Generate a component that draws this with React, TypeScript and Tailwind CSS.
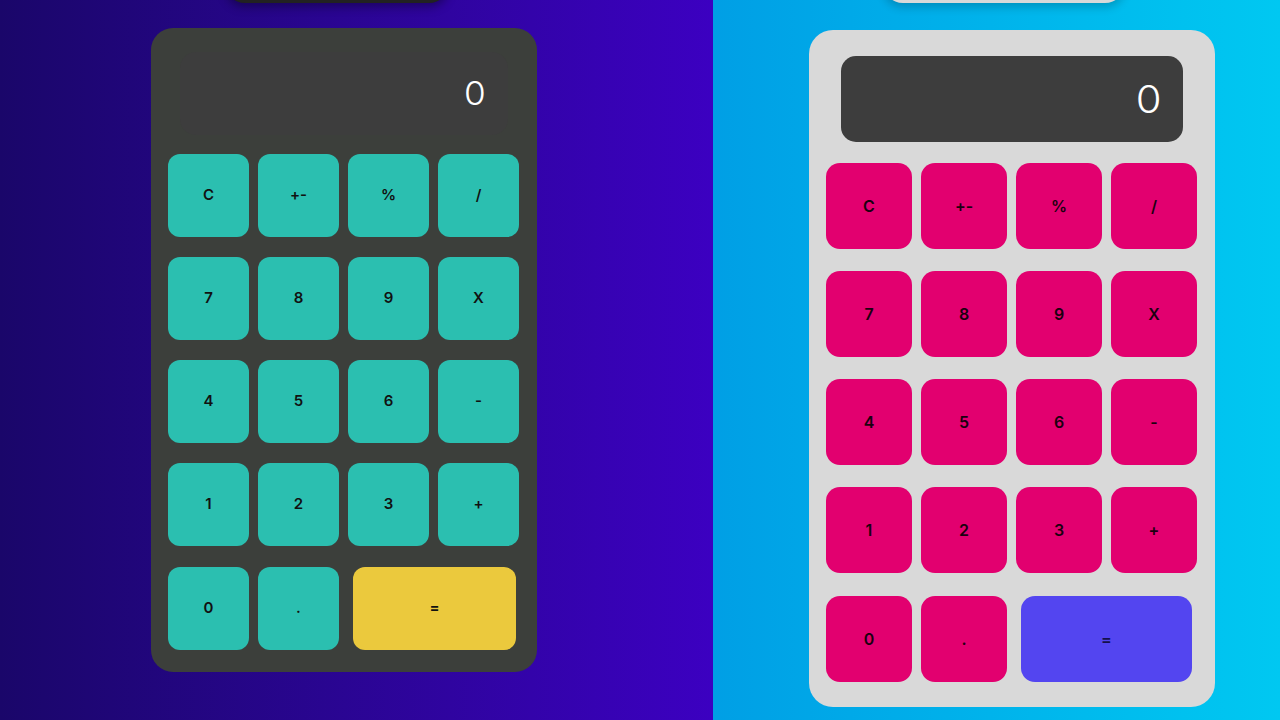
const keys = ["C", "+-", "%", "/", "7", "8", "9", "X", "4", "5", "6", "-", "1", "2", "3", "+"];

function DarkCalc() {
  return (
    <div className="w-[386px] h-[644px] rounded-[22px] bg-[#3c3f3b] pt-[24px] px-[17px] flex flex-col">
      <div className="mx-[12px] h-[83px] rounded-[16px] bg-[#3d3d3d] flex items-center justify-end pr-[23px]">
        <span className="text-[32px] font-light text-white leading-none scale-x-110">0</span>
      </div>
      <div className="mt-[19px] grid grid-cols-[repeat(4,81px)] gap-x-[9px] gap-y-[20px]">
        {keys.map((k) => (
          <button
            key={k}
            className="h-[83px] rounded-[12px] bg-[#2bbfb0] text-[15px] font-semibold text-[#111]"
          >
            {k}
          </button>
        ))}
      </div>
      <div className="mt-[21px] flex">
        <button className="w-[81px] h-[83px] rounded-[12px] bg-[#2bbfb0] text-[15px] font-semibold text-[#111]">
          0
        </button>
        <button className="ml-[9px] w-[81px] h-[83px] rounded-[12px] bg-[#2bbfb0] text-[15px] font-semibold text-[#111]">
          .
        </button>
        <button className="ml-[14px] w-[163px] h-[83px] rounded-[12px] bg-[#ebc93d] text-[15px] font-semibold text-[#111]">
          =
        </button>
      </div>
    </div>
  );
}

function LightCalc() {
  return (
    <div className="w-[406px] h-[677px] rounded-[24px] bg-[#d9d9d9] pt-[26px] px-[17px] flex flex-col">
      <div className="mx-[15px] h-[86px] rounded-[15px] bg-[#3d3d3d] flex items-center justify-end pr-[23px]">
        <span className="text-[38px] font-light text-white leading-none scale-x-110">0</span>
      </div>
      <div className="mt-[21px] grid grid-cols-[repeat(4,86px)] gap-x-[9px] gap-y-[22px]">
        {keys.map((k) => (
          <button
            key={k}
            className="h-[86px] rounded-[14px] bg-[#e2006f] text-[16px] font-semibold text-[#1a0010]"
          >
            {k}
          </button>
        ))}
      </div>
      <div className="mt-[23px] flex">
        <button className="w-[86px] h-[86px] rounded-[14px] bg-[#e2006f] text-[16px] font-semibold text-[#1a0010]">
          0
        </button>
        <button className="ml-[9px] w-[86px] h-[86px] rounded-[14px] bg-[#e2006f] text-[16px] font-semibold text-[#1a0010]">
          .
        </button>
        <button className="ml-[14px] w-[171px] h-[86px] rounded-[14px] bg-[#5345f0] text-[16px] font-semibold text-[#14104a]">
          =
        </button>
      </div>
    </div>
  );
}

export default function App() {
  return (
    <div
      className="flex w-[1280px] h-[720px] overflow-hidden"
      style={{ fontFamily: "Inter, 'Open Sans', sans-serif" }}
    >
      <div className="w-[713px] h-full bg-gradient-to-r from-[#1a066a] to-[#3c00c1] flex flex-col pl-[151px]">
        <div className="ml-[74px] w-[224px] h-[40px] -mt-[37px] rounded-[20px] bg-[#222222] shadow-[0_4px_10px_rgba(0,0,0,0.35)]" />
        <div className="mt-[25px]">
          <DarkCalc />
        </div>
      </div>
      <div className="flex-1 h-full bg-gradient-to-r from-[#009fe5] to-[#00c8f1] flex flex-col pl-[96px]">
        <div className="ml-[74px] w-[242px] h-[40px] -mt-[37px] rounded-[20px] bg-[#d9d9d9] shadow-[0_4px_10px_rgba(0,0,0,0.2)]" />
        <div className="mt-[27px]">
          <LightCalc />
        </div>
      </div>
    </div>
  );
}
